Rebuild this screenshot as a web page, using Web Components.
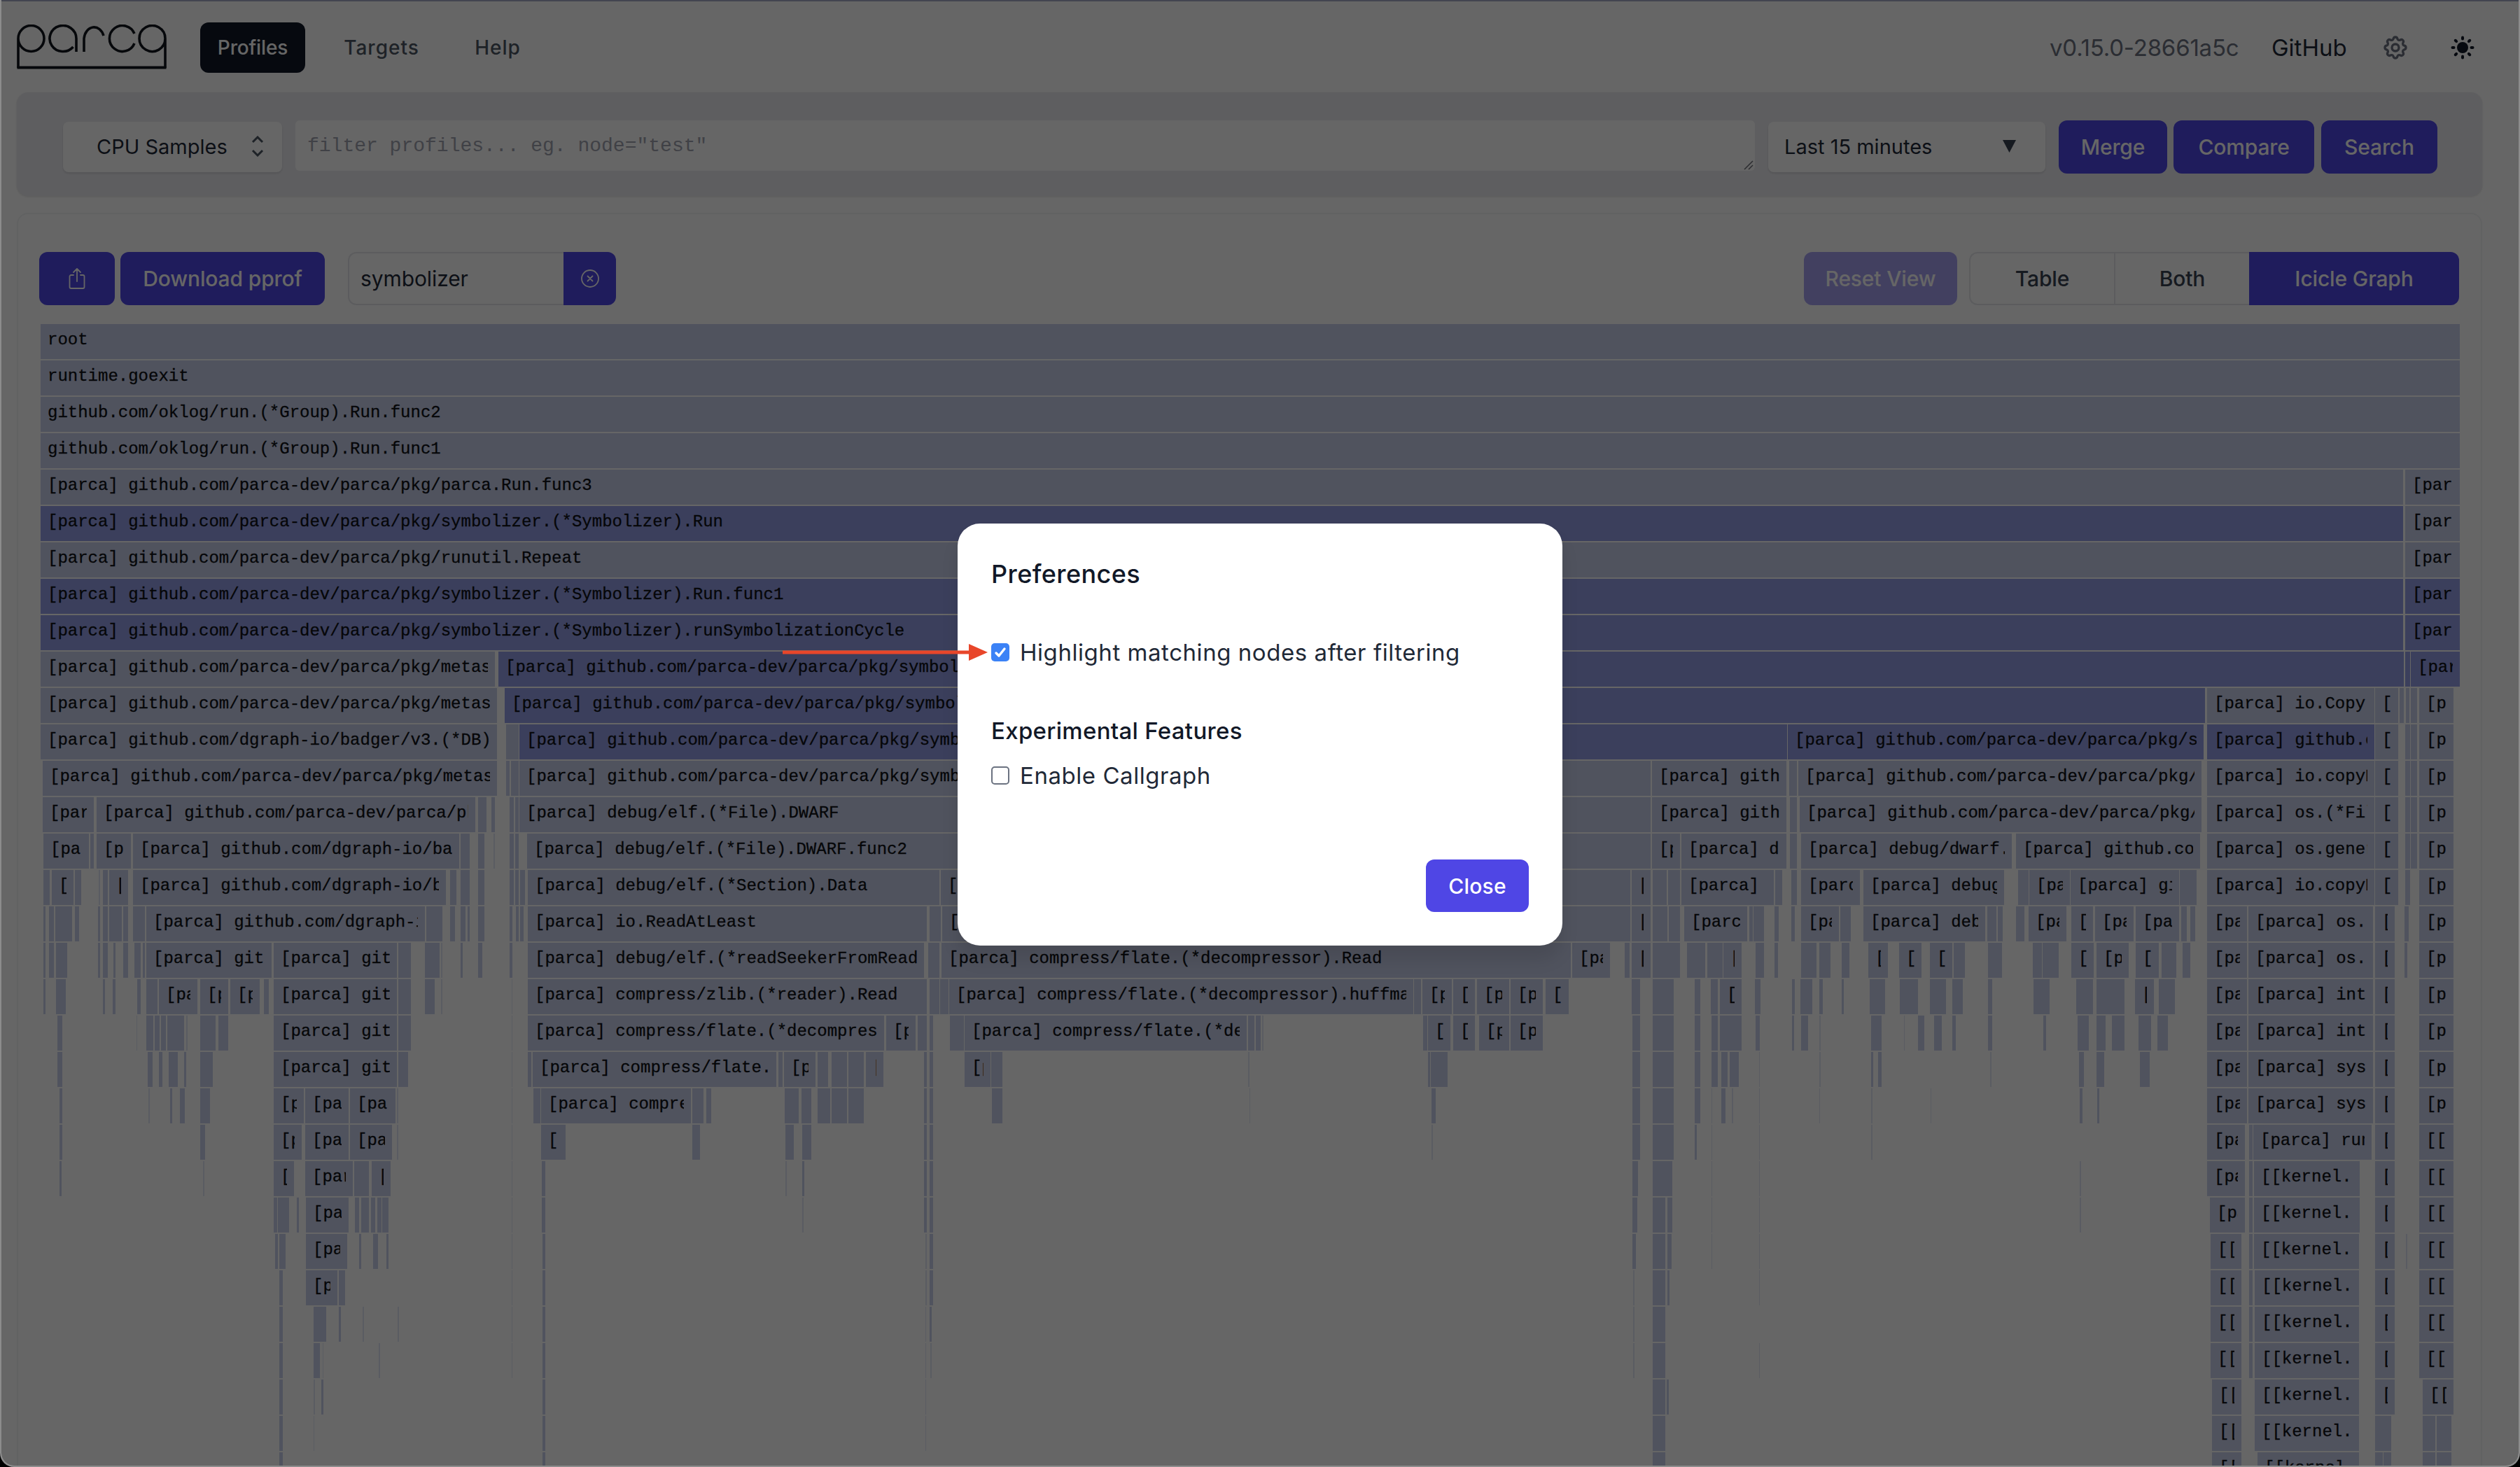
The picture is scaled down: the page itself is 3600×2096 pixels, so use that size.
<!DOCTYPE html>
<html lang="en"><head><meta charset="utf-8"><title>Parca</title>
<style>
html,body{margin:0;padding:0;background:#000;height:100%;overflow:hidden}
body{font-family:"Inter","Liberation Sans",sans-serif;color:#111827}
</style></head>
<body>
<parca-app></parca-app>
<script>
const UI='"Inter","Liberation Sans",sans-serif', MONO='"Liberation Mono",monospace';
function define(name,html){
  customElements.define(name,class extends HTMLElement{
    constructor(){super();this.attachShadow({mode:'open'}).innerHTML=html;}
  });
}
define('ui-button',`<style>
:host{display:inline-flex;flex:none;align-items:center;justify-content:center;box-sizing:border-box;height:76px;background:#4f46e5;color:#fff;border-radius:12px;font:500 30px ${UI};letter-spacing:-.15px;white-space:nowrap}
:host([kind=dim]){opacity:.5}
:host([kind=nav]){height:72px;background:transparent;color:#4b5563;font-size:28px;letter-spacing:1px}
:host([kind=navon]){height:72px;background:#111827;color:#fff;font-size:28px}
:host([kind=seg]){background:transparent;color:#374151;border-radius:0}
:host([kind=segon]){border-radius:0 12px 12px 0}
</style><slot></slot>`);
define('parca-logo',`<style>:host{display:block;flex:none;width:216px;height:66px}svg{display:block}</style>
<svg width="216" height="66" viewBox="24 46 216 66" fill="none" stroke="#11141c" stroke-width="3.6" role="img" aria-label="parca">
<path d="M26 108V66a18.5 18.5 0 1 1 18.5 18.5A18.5 18.5 0 0 1 26 66"/>
<path d="M109 85V66a19 18.5 0 1 0-4.500 12"/>
<path d="M120 85V66A14.500 18.500 0 0 1 148 62"/>
<path d="M192 73a18.500 18.500 0 1 1 0-14" />
<path d="M236 66a18.500 18.500 0 1 0 0 .1M236 66v42"/>
<path d="M24.500 107.500H237.500" stroke-width="4"/>
</svg>`);
define('parca-nav',`<style>
:host{display:flex;align-items:center;box-sizing:border-box;height:130px;padding:2px 0 0 24px}
.links{display:flex;margin-left:46px}
.right{margin-left:auto;display:flex;align-items:center}
.ver{color:#6b7280;font:400 33px ${UI};letter-spacing:-.2px;width:317px}
.gh{color:#1f2937;font:400 33px ${UI};width:157px}
svg{display:block;flex:none}
</style>
<parca-logo></parca-logo>
<div class="links"><ui-button kind="navon" style="width:150px">Profiles</ui-button><ui-button kind="nav" style="width:218px">Targets</ui-button><ui-button kind="nav" style="width:114px">Help</ui-button></div>
<div class="right"><span class="ver">v0.15.0-28661a5c</span><span class="gh">GitHub</span>
<svg width="40" height="40" viewBox="0 0 24 24" fill="none" stroke="#6b7280" stroke-width="2" stroke-linecap="round" stroke-linejoin="round"><path d="M10.325 4.317c.426-1.756 2.924-1.756 3.35 0a1.724 1.724 0 002.573 1.066c1.543-.94 3.31.826 2.37 2.37a1.724 1.724 0 001.065 2.572c1.756.426 1.756 2.924 0 3.35a1.724 1.724 0 00-1.066 2.573c.94 1.543-.826 3.31-2.37 2.37a1.724 1.724 0 00-2.572 1.065c-.426 1.756-2.924 1.756-3.35 0a1.724 1.724 0 00-2.573-1.066c-1.543.94-3.31-.826-2.37-2.37a1.724 1.724 0 00-1.065-2.572c-1.756-.426-1.756-2.924 0-3.35a1.724 1.724 0 001.066-2.573c-.94-1.543.826-3.31 2.37-2.37.996.608 2.296.07 2.572-1.065z"/><path d="M15 12a3 3 0 11-6 0 3 3 0 016 0z"/></svg>
<svg style="margin:0 62px 0 56px" width="40" height="40" viewBox="0 0 40 40" fill="#111827"><circle cx="20" cy="20" r="8"/><g id="r"><rect x="18" y="3.500" width="4" height="6" rx="2"/><rect x="18" y="30.500" width="4" height="6" rx="2"/><rect x="3.500" y="18" width="6" height="4" rx="2"/><rect x="30.500" y="18" width="6" height="4" rx="2"/><rect x="18" y="3.500" width="4" height="6" rx="2" transform="rotate(45 20 20)"/><rect x="18" y="3.500" width="4" height="6" rx="2" transform="rotate(135 20 20)"/><rect x="18" y="3.500" width="4" height="6" rx="2" transform="rotate(225 20 20)"/><rect x="18" y="3.500" width="4" height="6" rx="2" transform="rotate(315 20 20)"/></g></svg>
</div>`);
define('parca-select',`<style>
:host{display:flex;flex:none;align-items:center;box-sizing:border-box;height:72px;padding-bottom:2px;background:#fff;border-radius:8px;box-shadow:0 2px 3px rgba(0,0,0,.1);font:400 29px ${UI};color:#1f2937;position:relative;justify-content:space-between}
</style><slot></slot>`);
define('parca-toolbar',`<style>
:host{display:flex;align-items:center;box-sizing:border-box;height:148px;margin:0 54px 0 24px;padding:8px 64px 0 66px;background:#ebebf0;border-radius:16px;box-shadow:0 1px 3px rgba(0,0,0,.12)}
.input{flex:1;box-sizing:border-box;height:72px;margin:-4px 19px 0;background:#fff;border-radius:6px;padding:20px 17px 0;font:28px/34px ${MONO};color:#a0a3b0;position:relative;white-space:pre}
.grip{position:absolute;right:2px;bottom:1px}
svg{display:block;flex:none}
.sp{padding:0 26px 2px 48px}.tm{padding:0 42px 2px 23px}
</style>
<parca-select class="sp" style="width:313px">CPU Samples<svg width="18" height="30" viewBox="0 0 18 30" fill="none" stroke="#4b5563" stroke-width="3"><path d="M2 9l7-7 7 7M2 21l7 7 7-7"/></svg></parca-select>
<div class="input">filter profiles... eg. node="test"<svg class="grip" width="14" height="14" viewBox="0 0 14 14" stroke="#6b6e78" stroke-width="1.500"><path d="M1 13L13 1M7 13l6-6"/></svg></div>
<parca-select class="tm" style="width:396px">Last 15 minutes<svg width="19" height="18" viewBox="0 0 19 18" fill="#374151"><path d="M0 0h19L9.500 18z"/></svg></parca-select>
<ui-button style="width:155px;margin-left:19px">Merge</ui-button>
<ui-button style="width:201px;margin-left:9px">Compare</ui-button>
<ui-button style="width:166px;margin-left:10px">Search</ui-button>`);
define('flame-controls',`<style>
:host{display:flex;align-items:center;height:76px}
.gap{margin-left:auto}
.search{display:flex;margin-left:33px;box-sizing:border-box;width:383px;height:76px}
.field{flex:1;box-sizing:border-box;border:2px solid #e5e7eb;border-right:0;border-radius:12px 0 0 12px;display:flex;align-items:center;padding-left:16px;font:400 30px ${UI};letter-spacing:-.1px;color:#1f2937}
.seg{display:flex;margin-left:17px;box-sizing:border-box;width:700px;height:76px}
.seg .box{display:flex;box-sizing:border-box;border:2px solid #e5e7eb;border-right:0;border-radius:12px 0 0 12px}
.div{width:2px;background:#e5e7eb}
svg{display:block}
</style>
<ui-button style="width:108px"><svg width="26" height="32" viewBox="0 0 26 32" fill="none" stroke="#fff" stroke-width="1.800" stroke-linecap="round" stroke-linejoin="round"><path d="M8 11H4.500a2 2 0 0 0-2 2v15a2 2 0 0 0 2 2h17a2 2 0 0 0 2-2V13a2 2 0 0 0-2-2H18M13 20V2M8 7l5-5 5 5"/></svg></ui-button>
<ui-button style="width:292px;margin-left:8px">Download pprof</ui-button>
<div class="search"><div class="field">symbolizer</div><ui-button class="x" style="width:75px;border-radius:0 12px 12px 0"><svg width="28" height="28" viewBox="0 0 28 28" fill="none" stroke="#fff" stroke-width="1.800" stroke-linecap="round"><circle cx="14" cy="14" r="12"/><path d="M10.500 10.500l7 7M17.500 10.500l-7 7"/></svg></ui-button></div>
<ui-button class="gap" kind="dim" style="width:219px">Reset View</ui-button>
<div class="seg"><div class="box"><ui-button kind="seg" style="width:205px;height:72px">Table</ui-button><div class="div"></div><ui-button kind="seg" style="width:191px;height:72px">Both</ui-button></div><ui-button kind="segon" style="width:300px">Icicle Graph</ui-button></div>`);

const P='[parca] github.com/parca-dev/parca/pkg/', K='[[kernel.kallsyms]]', G='[parca] github.com/dgraph-io/badger/v3', p='[parca] github.com/parca-dev/parca';
const Z4=x=>x/1.12, Z5=x=>2200+x/1.12, Z6=x=>1300+x/1.568, RAW=x=>x;
const D=1;
const blocks=[
[RAW,{
0:[[58,3514,'root']],1:[[58,3514,'runtime.goexit']],
2:[[58,3514,'github.com/oklog/run.(*Group).Run.func2']],3:[[58,3514,'github.com/oklog/run.(*Group).Run.func1']],
4:[[58,3433,P+'parca.Run.func3'],[3436,3514,p]],
5:[[58,3433,P+'symbolizer.(*Symbolizer).Run',D],[3436,3514,p]],
6:[[58,3433,P+'runutil.Repeat'],[3436,3514,p]],
7:[[58,3433,P+'symbolizer.(*Symbolizer).Run.func1',D],[3436,3514,p,D]],
8:[[58,3433,P+'symbolizer.(*Symbolizer).runSymbolizationCycle',D],[3436,3514,p,D]],
9:[[58,707,P+'metastore.(*Client)'],[712,3434,P+'symbolizer.(*Symbolizer).symbolize',D],[3436,3443,0,D],[3444,3514,p,D]],
10:[[58,710,P+'metastore.(*BadgerMeta)'],[721,3150,P+'symbolizer.(*Symbolizer).symbolizeLocations',D]]
}],
[Z4,{
11:[[65,795,'[parca] github.com/dgraph-io/badger/v3.(*DB)'],[810,830],[831,2859,P+'symbolizer.(*Symbolizer).sym',D]],
12:[[68,795,P+'metastore.(*BadgerMeta)'],[810,815],[818,830],[831,2641,P+'symbolizer.(*Symbolizer)']],
13:[[68,150,p],[155,760,P+'metastore.(*Badger'],[765,778],[786,792],[815,822],[824,830],[831,2641,'[parca] debug/elf.(*File).DWARF']],
14:[[70,142,p],[144,150],[155,210,p],[213,735,G],[737,752],[765,775],[790,792],[815,822],[824,830],[843,2641,'[parca] debug/elf.(*File).DWARF.func2']],
15:[[70,80],[83,118,p],[120,130],[158,160],[165,172],[175,205,p],[213,713,G],[720,730],[737,752],[765,775],[815,822],[824,830],[832,840],[845,1503,'[parca] debug/elf.(*Section).Data'],[1505,2608,p]],
16:[[70,73],[78,86],[88,115,p],[120,127],[157,160],[165,172],[175,195],[197,205],[213,232],[234,680,G],[682,708,p],[720,728],[737,745],[748,752],[765,775],[815,820],[825,830],[832,838],[845,1483,'[parca] io.ReadAtLeast'],[1487,1505],[1507,2608,p]],
17:[[70,73],[78,86],[90,108],[157,160],[165,172],[182,185],[197,205],[215,225],[228,232],[234,435,'[parca] github.com'],[438,635,'[parca] github.com'],[637,657],[680,703],[706,708],[737,740],[765,772],[815,820],[845,1478,'[parca] debug/elf.(*readSeekerFromReaderAt)']],
18:[[70,73],[90,105],[165,168],[180,185],[220,225],[234,252],[254,316,p],[320,365,p],[368,415,p],[422,430],[438,635,'[parca] github.com'],[637,657],[680,695],[706,708],[845,1478,'[parca] compress/zlib.(*reader).Read']],
19:[[92,100],[218,220],[234,245],[248,255],[258,265],[268,295],[298,300],[320,345],[350,365],[438,635,'[parca] github.com'],[637,657],[845,1415,'[parca] compress/flate.(*decompressor)'],[1418,1465,p],[1468,1478]],
20:[[92,100],[236,244],[254,260],[270,285],[294,298],[320,340],[438,635,'[parca] github.com'],[637,653],[845,850],[852,1242,'[parca] compress/flate.(*dict'],[1245,1252],[1254,1305,p],[1308,1325],[1330,1355],[1358,1382],[1385,1414,p]],
21:[[95,100],[238,240],[272,275],[288,296],[320,336],[438,486,p],[488,558,p],[560,633,p],[635,637],[853,865],[866,1105,'[parca] compress/flate'],[1108,1126],[1130,1138],[1255,1278],[1282,1298],[1308,1328],[1330,1355],[1358,1382]],
22:[[95,100],[320,328],[438,483,p],[488,558,p],[560,627,p],[635,637],[866,905,p],[1108,1120],[1257,1270],[1284,1298]],
23:[[95,99],[325,327],[438,470,p],[488,565,p],[567,590],[595,625,p],[867,873],[1257,1259],[1284,1287]],
24:[[438,443],[445,463],[475,478],[490,558,p],[568,575],[578,590],[594,600],[604,610],[612,622],[867,873],[1284,1286]],
25:[[440,445],[447,457],[490,556,p],[575,578],[597,605],[618,622],[868,873]],
26:[[447,453],[490,540,p],[542,552],[868,873]],
27:[[447,453],[502,522],[542,546],[580,582],[636,638],[868,873]],
28:[[447,453],[502,512],[516,518],[606,608],[868,873]],
29:[[447,453],[502,504],[514,518],[868,873]],
30:[[447,452],[502,503],[868,872]],
31:[[447,452],[868,872]]
}],
[Z6,{
17:[[40,66],[70,1480,'[parca] compress/flate.(*decompressor).Read'],[1483,1568,p]],
18:[[32,38],[44,66],[68,86],[88,1127,'[parca] compress/flate.(*decompressor).huffmanBlock'],[1129,1145],[1148,1213,p],[1216,1266,p],[1270,1342,p],[1345,1417,p],[1423,1476,p]],
19:[[32,38],[44,52],[90,120],[122,754,'[parca] compress/flate.(*decompressor)'],[757,772],[775,786],[788,792],[1150,1158],[1160,1210,p],[1216,1266,p],[1275,1342,p],[1345,1417,p]],
20:[[32,38],[44,52],[122,180,p],[182,207],[758,761],[1160,1165],[1167,1204]],
21:[[32,38],[44,52],[183,207],[760,762],[1168,1177]],
22:[[32,38],[44,52],[1168,1171]],
23:[[32,38],[44,52]],24:[[32,38],[44,52]],25:[[34,38],[44,52]],26:[[34,37],[44,51]],27:[[34,36],[44,49]],28:[[34,36],[45,49]],29:[[34,36]],30:[[34,36]]
}],
[Z5,{
10:[[1067,1335,'[parca] io.Copy'],[1336,1373,p],[1375,1382],[1385,1391],[1393,1403],[1407,1462,p]],
11:[[396,1062,P+'symbolizer.(*Symbolizer)',D],[1067,1335,'[parca] github.com/parca',D],[1336,1373,p],[1384,1392],[1393,1403],[1407,1462,p]],
12:[[179,394,'[parca] github.com'],[399,411],[413,1058,P+'symbolizer.(*Sym'],[1067,1335,'[parca] io.copyBuffer'],[1336,1373,p],[1384,1392],[1393,1403],[1407,1462,p]],
13:[[179,394,'[parca] github.com'],[400,411],[416,1058,P+'symbolizer.(*Sym'],[1067,1335,'[parca] os.(*File).Read'],[1336,1373,p],[1384,1392],[1393,1403],[1407,1462,p]],
14:[[179,224,p],[226,394,'[parca] debug/dwarf'],[400,411],[418,755,'[parca] debug/dwarf.(*Data)'],[762,1056,'[parca] github.com/parca'],[1067,1335,'[parca] os.genericReadFrom'],[1336,1373,p],[1384,1392],[1393,1403],[1407,1462,p]],
15:[[147,177,p],[180,203],[205,224],[226,374,'[parca] debug'],[376,388],[402,411],[418,512,p],[517,742,'[parca] debug/dwarf.(*Data)'],[765,782],[783,848,p],[849,1022,'[parca] github.com'],[1024,1050],[1067,1335,'[parca] io.copyBuffer'],[1336,1373,p],[1384,1392],[1407,1462,p]],
16:[[147,177,p],[180,204],[206,224],[231,332,p],[335,340],[342,358],[375,382],[402,408],[418,478,p],[480,497],[517,712,'[parca] debug/dwarf.'],[716,730],[732,740],[762,775],[782,842,p],[850,885,p],[888,950,p],[953,1022,p],[1026,1035],[1040,1048],[1067,1131,p],[1133,1333,'[parca] os.(*File)'],[1336,1367,p],[1383,1390],[1407,1462,p]],
17:[[135,143],[147,177,p],[180,224],[235,264],[268,292],[293,323,p],[345,358],[375,381],[418,442],[447,465],[483,495],[525,557,p],[575,610,p],[624,660,p],[662,680],[717,739],[788,803],[804,830],[850,886,p],[890,942,p],[953,990,p],[995,1018,p],[1028,1040],[1067,1131,p],[1133,1333,'[parca] os.(*File)'],[1336,1367,p],[1383,1388],[1407,1462,p]],
18:[[147,160],[180,214],[247,256],[273,285],[288,323,p],[344,353],[403,408],[417,436],[447,453],[483,486],[528,552],[576,605],[624,650],[660,677],[717,724],[790,815],[858,885],[890,935],[952,982,p],[990,1016],[1067,1131,p],[1133,1333,'[parca] internal/poll'],[1336,1367,p],[1407,1462,p]],
19:[[148,160],[180,214],[248,256],[274,285],[288,323],[345,352],[403,407],[418,429],[447,449],[530,546],[582,584],[605,615],[630,643],[660,665],[717,724],[805,810],[860,878],[890,905],[915,935],[958,978],[988,1005],[1067,1131,p],[1133,1333,'[parca] internal/poll'],[1336,1367,p],[1407,1462,p]],
20:[[148,160],[180,214],[248,256],[274,285],[290,300],[303,318],[350,352],[447,449],[530,533],[541,547],[720,722],[862,870],[890,903],[960,975],[1067,1131,p],[1133,1333,'[parca] syscall.read'],[1336,1367,p],[1407,1462,p]],
21:[[148,160],[180,214],[248,256],[274,276],[290,297],[307,309],[350,352],[447,448],[530,532],[625,626],[863,868],[892,895],[1067,1131,p],[1133,1333,'[parca] syscall.Syscall'],[1336,1367,p],[1407,1462,p]],
22:[[148,160],[180,214],[248,251],[274,276],[350,352],[530,532],[1067,1128,p],[1135,1140],[1141,1330,'[parca] runtime.syscall'],[1336,1367,p],[1407,1462,K]],
23:[[148,157],[180,212],[274,275],[350,352],[864,866],[1067,1128,p],[1135,1140],[1142,1312,K],[1336,1367,p],[1407,1462,K]],
24:[[148,156],[180,200],[204,212],[274,275],[350,352],[864,866],[1072,1128,p],[1135,1140],[1142,1312,K],[1336,1367,p],[1407,1462,K]],
25:[[148,153],[180,200],[204,210],[274,275],[350,352],[1073,1122,K],[1135,1140],[1142,1310,K],[1336,1367,p],[1385,1388],[1407,1462,K]],
26:[[149,151],[180,200],[204,207],[350,352],[1073,1122,K],[1135,1140],[1143,1310,K],[1336,1367,p],[1407,1462,K]],
27:[[149,151],[180,200],[1073,1122,K],[1135,1140],[1143,1310,K],[1336,1367,p],[1407,1462,K]],
28:[[149,151],[180,200],[350,352],[1073,1122,K],[1135,1140],[1143,1310,K],[1336,1367,p],[1407,1462,K]],
29:[[180,200],[203,206],[1075,1122,K],[1143,1310,K],[1336,1367,p],[1412,1462,K]],
30:[[180,200],[1075,1122,K],[1143,1310,K],[1336,1362,p],[1412,1432],[1435,1458]],
31:[[180,200],[1075,1122,K],[1148,1310,K],[1336,1348],[1350,1362],[1412,1432],[1435,1458]]
}]];
customElements.define('flame-graph',class extends HTMLElement{
  constructor(){
    super();
    const root=this.attachShadow({mode:'open'});
    root.innerHTML=`<style>
:host{display:block;margin-top:27px;font:24px/46px ${MONO};color:#0d0f14;-webkit-text-stroke:.3px #0d0f14}
.row{display:flex;height:50px;margin-bottom:2px}
.c{flex:none;box-sizing:border-box;height:50px;background:#c8cfeb;overflow:hidden;padding:0 10px 0 10px}
.c.d{background:#949ee6}
.c.thin{opacity:.55}
.c span{display:block;overflow:hidden;white-space:pre}
</style>`;
    const rows=[];for(let i=0;i<32;i++)rows.push([]);
    for(const [f,b] of blocks)for(const r in b)for(const e of b[r])rows[r].push({a:f(e[0]),b:f(e[1]),t:e[2],d:e[3]});
    for(let i=14;i<29;i++)rows[i].push({a:731,b:732});
    const origin=56, frag=document.createDocumentFragment();
    for(const list of rows){
      list.sort((x,y)=>x.a-y.a);
      const row=document.createElement('div');row.className='row';
      let end=origin;
      for(const c of list){
        const a=Math.max(Math.round(c.a),end), b=Math.round(c.b);
        if(b<=a)continue;
        const w=b-a, el=document.createElement('div');
        el.className='c'+(c.d?' d':'')+(w<3?' thin':'');
        el.style.cssText=`width:${w}px;margin-left:${a-end}px`+(w<20?';padding:0':'');
        if(c.t&&w>=20){
          const s=document.createElement('span');
          s.textContent=c.t.slice(0,Math.ceil((w-20)/14.4));
          el.append(s);
        }
        row.append(el);end=b;
      }
      frag.append(row);
    }
    root.append(frag);
  }
});
define('parca-card',`<style>
:host{display:block;box-sizing:border-box;margin:24px 54px 0 24px;padding:54px 31px 0 30px;border:2px solid #f3f4f6;border-bottom:0;border-radius:16px 16px 0 0;background:#fff}
</style><flame-controls></flame-controls><flame-graph></flame-graph>`);
define('check-row',`<style>
:host{display:flex;align-items:center;height:48px;gap:15px;font:400 33px ${UI};letter-spacing:.55px;color:#1f2937}
.b{flex:none;box-sizing:border-box;width:26px;height:26px;border:2px solid #6b7280;border-radius:5px;display:block;background:#fff}
:host([checked]) .b{border:0;background:#3b82f6}
svg{display:none}:host([checked]) svg{display:block}
</style><span class="b"><svg width="26" height="26" viewBox="0 0 26 26" fill="none" stroke="#fff" stroke-width="3.400" stroke-linecap="round" stroke-linejoin="round"><path d="M7 14l4 4 8-10"/></svg></span><slot></slot>`);
define('prefs-modal',`<style>
:host{display:block;box-sizing:border-box;width:864px;height:603px;padding:48px;background:#fff;border-radius:32px;box-shadow:0 20px 25px rgba(0,0,0,.1);color:#111827}
h2,h3{margin:0;height:48px;display:flex;align-items:center;font-weight:500;font-family:${UI}}
h2{font-size:36px;letter-spacing:.4px;margin-bottom:64px}
h3{font-size:33px;letter-spacing:.3px;margin-top:64px;margin-bottom:16px}
.foot{display:flex;justify-content:flex-end;margin-top:96px}
</style>
<h2>Preferences</h2>
<check-row checked>Highlight matching nodes after filtering</check-row>
<h3>Experimental Features</h3>
<check-row>Enable Callgraph</check-row>
<div class="foot"><ui-button style="width:147px;height:75px;letter-spacing:.2px">Close</ui-button></div>`);
define('modal-overlay',`<style>
:host{position:absolute;inset:0;box-sizing:border-box;padding-top:5px;display:flex;align-items:center;justify-content:center;background:rgba(0,0,0,.6)}
.arrow{position:absolute;left:1116px;top:918px}
</style><slot></slot>
<svg class="arrow" width="295" height="28" viewBox="0 0 295 28"><rect x="0" y="11.500" width="268" height="5" fill="#e8462a"/><path d="M266 2l27 12-27 12z" fill="#e8462a"/></svg>`);
define('parca-app',`<style>
:host{display:block;box-sizing:border-box;position:relative;width:3600px;height:2096px;overflow:hidden;background:#fff;border:solid #8c8c8c;border-width:0 2px 2px 2px;border-radius:0 0 20px 20px}
.strip{height:2px;margin:0 -2px;background:#a8adc7}
.wrap{display:block;margin:0 -2px}
</style>
<div class="strip"></div><div class="wrap"><parca-nav></parca-nav><parca-toolbar></parca-toolbar><parca-card></parca-card></div>
<modal-overlay><prefs-modal></prefs-modal></modal-overlay>`);
</script>
</body></html>
